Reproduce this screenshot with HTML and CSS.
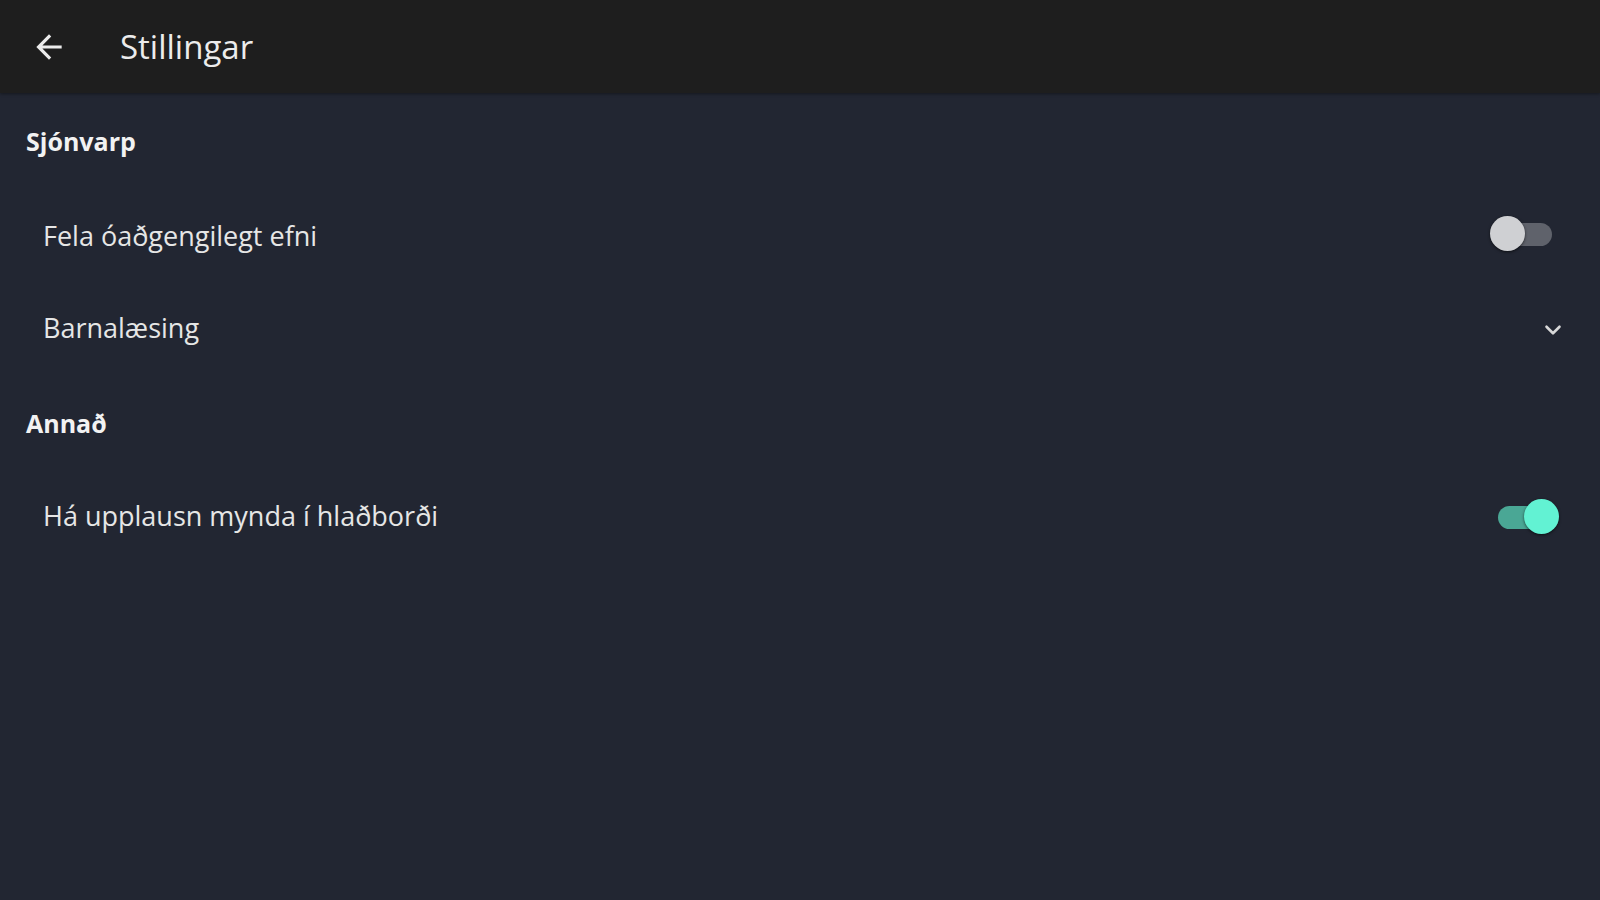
FILE: index.html
```html
<!DOCTYPE html>
<html lang="is">
<head>
<meta charset="utf-8">
<title>Stillingar</title>
<link rel="stylesheet" href="styles.css">
</head>
<body>
<header class="topbar">
  <button class="back" aria-label="Til baka">
    <svg viewBox="0 0 24 24" width="38" height="38"><path d="M20 11H7.83l5.59-5.59L12 4l-8 8 8 8 1.41-1.41L7.83 13H20v-2z" fill="#ececec"/></svg>
  </button>
  <h1 class="title">Stillingar</h1>
</header>
<main class="content">
  <h2 class="section first">Sjónvarp</h2>
  <div class="row">
    <span class="label">Fela óaðgengilegt efni</span>
    <span class="switch off"><span class="track"></span><span class="knob"></span></span>
  </div>
  <div class="row">
    <span class="label">Barnalæsing</span>
    <svg class="chev" viewBox="0 0 24 24" width="26" height="26"><path d="M6 9l6 6 6-6" fill="none" stroke="#d8d8d8" stroke-width="2.4" stroke-linecap="round" stroke-linejoin="round"/></svg>
  </div>
  <h2 class="section">Annað</h2>
  <div class="row">
    <span class="label">Há upplausn mynda í hlaðborði</span>
    <span class="switch on"><span class="track"></span><span class="knob"></span></span>
  </div>
</main>
</body>
</html>
```
FILE: styles.css
```css
* { box-sizing: border-box; }
html, body { margin: 0; height: 100%; }
body {
  background: #222632;
  color: #ececec;
  font-family: "Open Sans", "Noto Sans", sans-serif;
}
.topbar {
  height: 93px;
  background: #1e1e1e;
  display: flex;
  align-items: center;
  padding-left: 30px;
  box-shadow: 0 1px 3px rgba(0,0,0,0.4);
}
.back {
  background: none;
  border: 0;
  padding: 0;
  width: 38px;
  height: 38px;
  display: flex;
  align-items: center;
  justify-content: center;
}
.title {
  margin: 0 0 0 52px;
  font-size: 33px;
  font-weight: 400;
  color: #ececec;
  line-height: 1;
}
.content {
  padding: 0 40px 0 26px;
}
.section {
  margin: 0;
  font-size: 25px;
  font-weight: 700;
  height: 96px;
  display: flex;
  align-items: center;
  padding-top: 4px;
  color: #f2f2f2;
}
.section.first { padding-top: 0; }
.row {
  height: 94px;
  display: flex;
  align-items: center;
  justify-content: space-between;
  padding-left: 17px;
  padding-top: 2px;
  margin-top: -2px;
}
.label {
  font-size: 27px;
  color: #e6e6e6;
}
.chev { margin-right: -6px; margin-top: 6px; }
.switch {
  position: relative;
  width: 66px;
  height: 36px;
  display: inline-block;
}
.track {
  position: absolute;
  top: 7px;
  height: 23px;
  border-radius: 12px;
}
.knob {
  position: absolute;
  top: 0;
  width: 35px;
  height: 35px;
  border-radius: 50%;
  box-shadow: 0 1px 3px rgba(0,0,0,0.6);
}
.switch.off { margin-right: 6px; margin-top: -2px; }
.switch.off .track { left: 4px; width: 60px; background: #5f626b; }
.switch.off .knob { left: 2px; background: #cfd0d3; }
.switch.on { margin-right: -4px; margin-top: 4px; }
.switch.on .track { left: 0; width: 60px; background: #4aa795; }
.switch.on .knob { left: 26px; background: #62f2d3; }
```
